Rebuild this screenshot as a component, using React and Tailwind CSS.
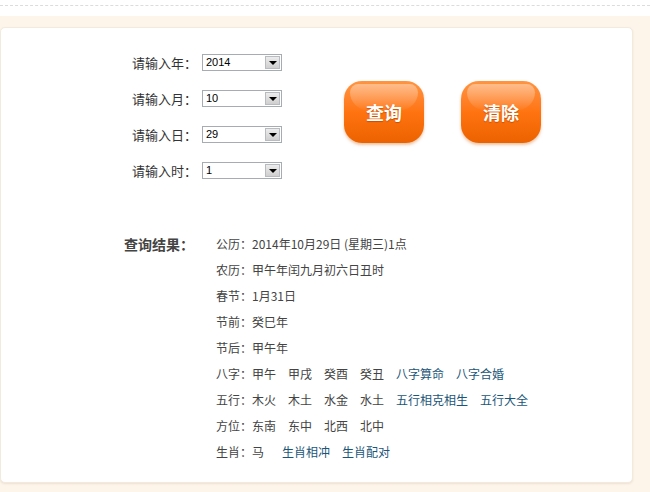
const font = { fontFamily: '"Noto Sans CJK SC", "Liberation Sans", sans-serif' };

const selects = [
  { label: "请输入年：", value: "2014" },
  { label: "请输入月：", value: "10" },
  { label: "请输入日：", value: "29" },
  { label: "请输入时：", value: "1" },
];

function FakeSelect({ value }) {
  return (
    <div className="flex h-[17px] w-[80px] items-center border border-[#a5acb2] bg-white pl-[3px]">
      <span className="flex-1 text-[11px] leading-none text-black [font-family:'Liberation_Sans',sans-serif]">{value}</span>
      <div className="mr-[1px] flex h-[13px] w-[15px] items-center justify-center border border-[#b8bcc0] bg-gradient-to-b from-[#ececec] to-[#cfcfcf]">
        <div className="h-0 w-0 border-x-[4px] border-t-[4px] border-x-transparent border-t-black" />
      </div>
    </div>
  );
}

function OrangeButton({ children }) {
  return (
    <div className="relative flex h-[62px] w-[80px] items-center justify-center overflow-hidden rounded-[18px] bg-gradient-to-b from-[#ff9440] via-[#ff7410] to-[#ec6200] shadow-[0_2px_3px_rgba(200,90,0,0.35)]">
      <div className="absolute left-[6px] right-[6px] top-[3px] h-[26px] rounded-t-[14px] rounded-b-[30px] bg-gradient-to-b from-[rgba(255,255,255,0.4)] to-[rgba(255,255,255,0.03)]" />
      <span className="relative text-[18px] font-bold text-white [text-shadow:0_1px_1px_rgba(160,60,0,0.6)]">{children}</span>
    </div>
  );
}

function Row({ label, items = [], links = [], text }) {
  return (
    <div className="flex h-[26px] items-center text-[12px] text-[#444]">
      <span>{label}：</span>
      {text && <span>{text}</span>}
      {items.map((it, i) => (
        <span key={i} className={i === 0 ? "" : "ml-[12px]"}>
          {it}
        </span>
      ))}
      {links.map((l, i) => (
        <a
          key={l}
          href="#"
          className={`text-[#1b5679] ${i > 0 ? "ml-[12px]" : items.length === 1 ? "ml-[18px]" : items.length ? "ml-[12px]" : ""}`}
        >
          {l}
        </a>
      ))}
    </div>
  );
}

export default function App() {
  return (
    <div className="h-[492px] w-[650px] overflow-hidden bg-white" style={font}>
      <div className="h-[16px] pt-[5px]">
        <div className="border-t border-dashed border-[#dcdcdc]" />
      </div>
      <div className="h-[476px] bg-[#fdf5ea] pb-[9px] pr-[17px] pt-[11px]">
        <div className="h-[456px] rounded-[5px] border border-[#f2eadf] bg-white shadow-[0_1px_2px_rgba(210,190,160,0.35)]">
          <div className="flex pt-[26px]">
            <div className="flex flex-col gap-[19px] pl-[131px]">
              {selects.map((s) => (
                <div key={s.label} className="flex items-center">
                  <span className="w-[70px] text-[13px] leading-none text-[#333]">{s.label}</span>
                  <FakeSelect value={s.value} />
                </div>
              ))}
            </div>
            <div className="ml-[62px] mt-[27px] flex gap-[37px]">
              <OrangeButton>查询</OrangeButton>
              <OrangeButton>清除</OrangeButton>
            </div>
          </div>
          <div className="mt-[52px] flex pl-[123px]">
            <div className="flex h-[26px] w-[92px] items-center text-[14px] font-bold text-[#444]">查询结果：</div>
            <div className="flex flex-col">
              <Row label="公历" text="2014年10月29日 (星期三)1点" />
              <Row label="农历" text="甲午年闰九月初六日丑时" />
              <Row label="春节" text="1月31日" />
              <Row label="节前" text="癸巳年" />
              <Row label="节后" text="甲午年" />
              <Row label="八字" items={["甲午", "甲戌", "癸酉", "癸丑"]} links={["八字算命", "八字合婚"]} />
              <Row label="五行" items={["木火", "木土", "水金", "水土"]} links={["五行相克相生", "五行大全"]} />
              <Row label="方位" items={["东南", "东中", "北西", "北中"]} />
              <Row label="生肖" items={["马"]} links={["生肖相冲", "生肖配对"]} />
            </div>
          </div>
        </div>
      </div>
    </div>
  );
}
